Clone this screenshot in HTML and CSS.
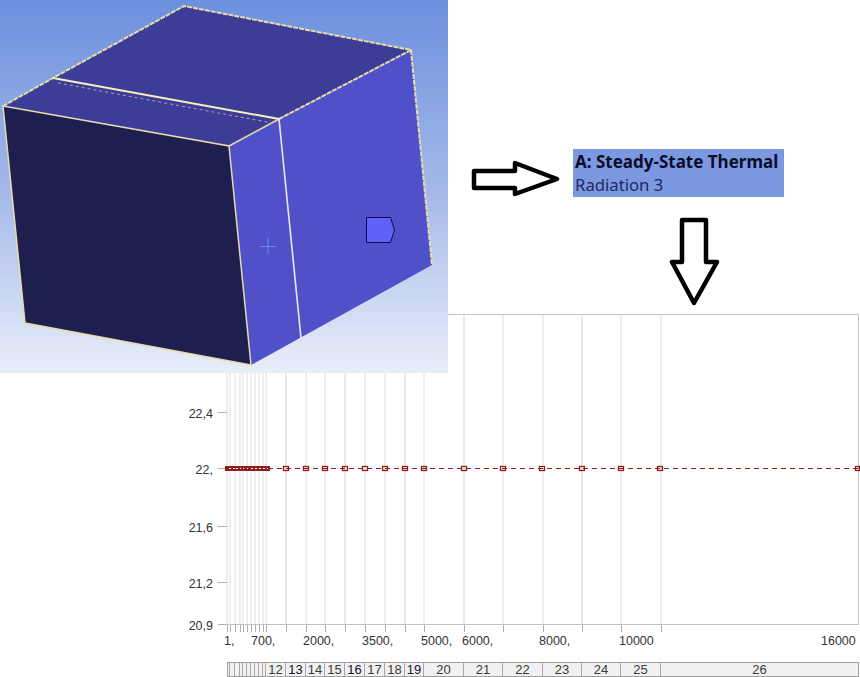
FILE: index.html
```html
<!DOCTYPE html>
<html lang="en">
<head>
<meta charset="utf-8">
<title>Radiation 3 result</title>
<link rel="stylesheet" href="styles.css">
</head>
<body>
<main class="stage">
  <svg class="plot" width="860" height="662" viewBox="0 0 860 662">
    <g class="grid">
      <path d="M227 314V625M230 314V625M235 314V625M240 314V625M243 314V625M247 314V625M251 314V625M255 314V625M259 314V625M263 314V625M266 314V625M306 314V625M325 314V625M365 314V625M385 314V625M424 314V625M503 314V625M543 314V625M621 314V625M661 314V625"/>
      <path class="thick" d="M286 314V625M345 314V625M405 314V625M464 314V625M582 314V625"/>
    </g>
    <path class="frame" d="M227 314.500H858.500V624.500H227"/>
    <path class="ticks" d="M218 412.500H227M218 468.500H227M218 526.500H227M218 582.500H227M218 624.500H227M227.500 625V632M230.500 625V632M235.500 625V632M240.500 625V632M243.500 625V632M247.500 625V632M251.500 625V632M255.500 625V632M259.500 625V632M263.500 625V632M266.500 625V632M286.500 625V632M306.500 625V632M325.500 625V632M345.500 625V632M365.500 625V632M385.500 625V632M405.500 625V632M424.500 625V632M464.500 625V632M503.500 625V632M543.500 625V632M582.500 625V632M621.500 625V632M661.500 625V632"/>
    <g class="axis-y">
      <text x="213" y="418">22,4</text>
      <text x="213" y="474">22,</text>
      <text x="213" y="532">21,6</text>
      <text x="213" y="588">21,2</text>
      <text x="213" y="630">20,9</text>
    </g>
    <g class="axis-x">
      <text x="224" y="645">1,</text>
      <text x="251" y="645">700,</text>
      <text x="303" y="645">2000,</text>
      <text x="362" y="645">3500,</text>
      <text x="421" y="645">5000,</text>
      <text x="462" y="645">6000,</text>
      <text x="539" y="645">8000,</text>
      <text x="619" y="645">10000</text>
      <text x="821" y="645">16000</text>
    </g>
    <path class="series" d="M268 468.500H858"/>
    <rect class="band" x="225" y="466" width="45" height="5"/>
    <g class="holes">
      <rect x="229" y="468" width="2" height="1"/><rect x="233" y="468" width="2" height="1"/><rect x="236" y="468" width="2" height="1"/><rect x="240" y="468" width="1" height="1"/><rect x="243" y="468" width="1" height="1"/><rect x="247" y="468" width="1" height="1"/><rect x="251" y="468" width="2" height="1"/><rect x="255" y="468" width="2" height="1"/><rect x="259" y="468" width="2" height="1"/><rect x="263" y="468" width="2" height="1"/><rect x="267" y="468" width="1" height="1"/>
    </g>
    <g class="markers">
      <rect x="283.500" y="466.500" width="5" height="4"/><rect x="303.500" y="466.500" width="5" height="4"/><rect x="322.500" y="466.500" width="5" height="4"/><rect x="342.500" y="466.500" width="5" height="4"/><rect x="362.500" y="466.500" width="5" height="4"/><rect x="382.500" y="466.500" width="5" height="4"/><rect x="402.500" y="466.500" width="5" height="4"/><rect x="421.500" y="466.500" width="5" height="4"/><rect x="461.500" y="466.500" width="5" height="4"/><rect x="500.500" y="466.500" width="5" height="4"/><rect x="539.500" y="466.500" width="5" height="4"/><rect x="579.500" y="466.500" width="5" height="4"/><rect x="618.500" y="466.500" width="5" height="4"/><rect x="657.500" y="466.500" width="5" height="4"/><rect x="855.500" y="466.500" width="4" height="4"/>
    </g>
  </svg>

  <div class="segments">
    <span></span><span></span><span></span><span></span><span></span><span></span><span></span><span></span><span></span><span></span>
    <span>12</span><span class="dark">13</span><span>14</span><span>15</span><span class="dark">16</span><span>17</span><span>18</span><span class="dark">19</span><span>20</span><span>21</span><span>22</span><span>23</span><span>24</span><span>25</span><span>26</span>
  </div>

  <svg class="model" width="448" height="373" viewBox="0 0 448 373">
    <defs>
      <linearGradient id="sky" x1="0" y1="0" x2="0" y2="1">
        <stop offset="0" stop-color="#6c90de"/>
        <stop offset="0.5" stop-color="#a3b8e8"/>
        <stop offset="1" stop-color="#e8edf9"/>
      </linearGradient>
    </defs>
    <rect width="448" height="373" fill="url(#sky)"/>
    <polygon class="face-top" points="53,78 184,6 411,50 279,119"/>
    <polygon class="face-top" points="3,106 53,78 279,119 229,146"/>
    <polygon class="face-side" points="229,146 279,119 411,50 432,265 251,365"/>
    <polygon class="face-front" points="3,106 229,146 251,365 25,323"/>
    <path class="edge" d="M3 106L229 146L251 365L25 323ZM229 146L279 119"/>
    <path class="edge rough" d="M3 106L53 78L184 6L411 50L432 265M411 50L279 119"/>
    <path class="edge bright" d="M53 78L279 119"/>
    <path class="edge dotted" d="M58 83L272 123"/>
    <path class="edge split" d="M279 119L301 338"/>
    <path class="cross" d="M260 246.500H276M268 238V254"/>
    <polygon class="tag" points="366.500,217.500 390.500,217.500 394.500,230 390.500,242.500 366.500,242.500"/>
  </svg>

  <svg class="arrow arrow-right" width="92" height="40" viewBox="0 0 92 40">
    <polygon points="4,12 45,12 45,4 87,20 45,35 45,29 4,29"/>
  </svg>

  <div class="caption">
    <strong>A: Steady-State Thermal</strong>
    <span>Radiation 3</span>
  </div>

  <svg class="arrow arrow-down" width="54" height="92" viewBox="0 0 54 92">
    <polygon points="13,3 37,3 37,45 48,45 25,86 3,45 13,45"/>
  </svg>
</main>
</body>
</html>
```

FILE: styles.css
```css
* { box-sizing: border-box; }

html, body {
  margin: 0;
  padding: 0;
  background: #fff;
}

.stage {
  position: relative;
  width: 860px;
  height: 677px;
  overflow: hidden;
  font-family: "Liberation Sans", Arial, sans-serif;
}

.plot { display: block; }

.grid path { fill: none; stroke: #e9e9e9; stroke-width: 1.500; }
.grid .thick { stroke: #ebebeb; stroke-width: 2; }
.frame { fill: none; stroke: #c4c4c4; stroke-width: 1; }
.ticks { fill: none; stroke: #b0b0b0; stroke-width: 1; }

.axis-y text, .axis-x text { font-size: 12.500px; fill: #333; }
.axis-y text { text-anchor: end; }

.series { fill: none; stroke: #8f1d1d; stroke-width: 1.200; stroke-dasharray: 5 4; }
.band { fill: #8f1d1d; }
.holes rect { fill: #fff; }
.markers rect { fill: none; stroke: #8f1d1d; stroke-width: 1.300; }

.segments {
  display: grid;
  grid-template-columns: 2px 5px 5px 3px 4px 4px 4px 4px 4px 3px 20px 20px 19px 20px 20px 20px 20px 19px 40px 39px 40px 39px 39px 40px 197px;
  width: 632px;
  height: 15px;
  margin-left: 227px;
  border: 1px solid #a0a0a0;
  background: #f1f1f1;
}

.segments span {
  border-right: 1px solid #a8a8a8;
  font-size: 13px;
  line-height: 13px;
  text-align: center;
  color: #3a3a3a;
}

.segments span:last-child { border-right: 0; }
.segments .dark { color: #1a1030; }

.model {
  position: absolute;
  left: 0;
  top: 0;
  filter: blur(0.4px);
}

.face-top { fill: #3d3c97; }
.face-side { fill: #5050c9; }
.face-front { fill: #1e1f4f; }

.edge { fill: none; stroke: #e4dcae; stroke-width: 1.500; }
.rough { stroke-dasharray: 5 1; stroke-width: 2; }
.bright { stroke: #f5efc4; stroke-width: 2; }
.dotted { stroke: #b69ab0; stroke-width: 1; stroke-dasharray: 3 3; }
.split { stroke: #e9e9f5; stroke-width: 1.600; }
.cross { fill: none; stroke: #6f8fe6; stroke-width: 1; }
.tag { fill: #6060fa; stroke: #0b0b55; stroke-width: 1; }

.arrow { position: absolute; }
.arrow polygon { fill: #fff; stroke: #000; stroke-width: 4.500; stroke-linejoin: round; }
.arrow-right { left: 470px; top: 159px; }
.arrow-down { left: 669px; top: 217px; }

.caption {
  position: absolute;
  left: 573px;
  top: 149px;
  width: 211px;
  height: 48px;
  padding: 1px 2px;
  background: #7b98e0;
  display: flex;
  flex-direction: column;
  font-family: "Noto Sans", Tahoma, sans-serif;
  line-height: 23px;
  white-space: nowrap;
}

.caption strong { font-size: 17px; color: #0b0c2c; }
.caption span { font-size: 16.700px; color: #1b2a66; }
```
